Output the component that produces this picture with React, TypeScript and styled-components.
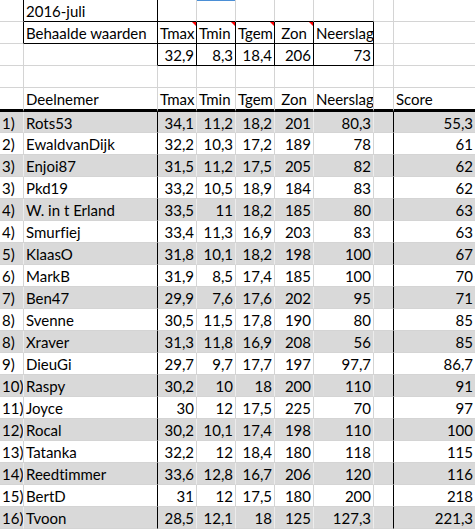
import React from 'react';
import styled, { createGlobalStyle, css } from 'styled-components';

const Global = createGlobalStyle`
  html, body { margin: 0; padding: 0; background: #ffffff; }
  body { font-family: Lato, "Liberation Sans", sans-serif; }
`;

const GRID = '#d4d4d4';
const GRID_ON_FILL = '#ececec';

type Edge = 'grid' | 'black' | 'none' | 'thick';

const edgeColor = (e?: Edge, fill?: boolean) =>
  e === 'black' || e === 'thick' ? '#000000' : e === 'none' ? 'transparent' : fill ? GRID_ON_FILL : GRID;

const Sheet = styled.div`
  display: grid;
  grid-template-columns: 24px 134px 39px 39px 39px 39px 60px 20px 82px;
  grid-template-rows: repeat(4, 22px) 24px 21px repeat(18, 22px);
  width: 476px;
  font-family: Lato, "Liberation Sans", sans-serif;
  font-size: 15px;
  font-variant-ligatures: none;
  font-feature-settings: "liga" 0, "clig" 0;
  color: #000000;
`;

const Cell = styled.div<{
  $r?: Edge;
  $b?: Edge;
  $fill?: boolean;
  $align?: 'left' | 'right' | 'center';
  $note?: boolean;
  $sel?: boolean;
}>`
  position: relative;
  box-sizing: border-box;
  overflow: hidden;
  white-space: nowrap;
  padding: 1px 2px 0 2px;
  line-height: 20px;
  text-align: ${(p) => p.$align ?? 'left'};
  background: ${(p) => (p.$fill ? '#d9d9d9' : '#ffffff')};
  border-right: 1px solid ${(p) => edgeColor(p.$r, p.$fill)};
  border-bottom: ${(p) => (p.$b === 'thick' ? '3px solid #000000' : `1px solid ${edgeColor(p.$b)}`)};
  ${(p) =>
    p.$note &&
    css`
      &::after {
        content: '';
        position: absolute;
        top: 0;
        right: 0;
        width: 0;
        height: 0;
        border-top: 4px solid #ff0000;
        border-left: 4px solid transparent;
      }
    `}
  ${(p) =>
    p.$sel &&
    css`
      box-shadow: inset 0 1px 0 #4b8fd6;
    `}
`;

type Row = [string, string, string, string, string, string, string, string];

const rows: Row[] = [
  ['1)', 'Rots53', '34,1', '11,2', '18,2', '201', '80,3', '55,3'],
  ['2)', 'EwaldvanDijk', '32,2', '10,3', '17,2', '189', '78', '61'],
  ['3)', 'Enjoi87', '31,5', '11,2', '17,5', '205', '82', '62'],
  ['3)', 'Pkd19', '33,2', '10,5', '18,9', '184', '83', '62'],
  ['4)', 'W. in t Erland', '33,5', '11', '18,2', '185', '80', '63'],
  ['4)', 'Smurfiej', '33,4', '11,3', '16,9', '203', '83', '63'],
  ['5)', 'KlaasO', '31,8', '10,1', '18,2', '198', '100', '67'],
  ['6)', 'MarkB', '31,9', '8,5', '17,4', '185', '100', '70'],
  ['7)', 'Ben47', '29,9', '7,6', '17,6', '202', '95', '71'],
  ['8)', 'Svenne', '30,5', '11,5', '17,8', '190', '80', '85'],
  ['8)', 'Xraver', '31,3', '11,8', '16,9', '208', '56', '85'],
  ['9)', 'DieuGi', '29,7', '9,7', '17,7', '197', '97,7', '86,7'],
  ['10)', 'Raspy', '30,2', '10', '18', '200', '110', '91'],
  ['11)', 'Joyce', '30', '12', '17,5', '225', '70', '97'],
  ['12)', 'Rocal', '30,2', '10,1', '17,4', '198', '110', '100'],
  ['13)', 'Tatanka', '32,2', '12', '18,4', '180', '118', '115'],
  ['14)', 'Reedtimmer', '33,6', '12,8', '16,7', '206', '120', '116'],
  ['15)', 'BertD', '31', '12', '17,5', '180', '200', '218'],
  ['16)', 'Tvoon', '28,5', '12,1', '18', '125', '127,3', '221,3'],
];

const heads = ['Tmax', 'Tmin', 'Tgem', 'Zon', 'Neerslag'];
const achieved = ['32,9', '8,3', '18,4', '206', '73'];

export default function App() {
  return (
    <>
      <Global />
      <Sheet>
        {/* Row 1 */}
        <Cell $r="black" />
        <Cell $r="black" $b="black">2016-juli</Cell>
        {[0, 1, 2, 3, 4].map((i) => (
          <Cell key={`r1-${i}`} $b="black" $sel={i === 1} />
        ))}
        <Cell />
        <Cell $r="none" />

        {/* Row 2 */}
        <Cell $r="black" />
        <Cell $r="black" $b="black">Behaalde waarden</Cell>
        {heads.map((h, i) => (
          <Cell key={`h1-${h}`} $r="black" $b="black" $note={i < 4} $align={h === 'Zon' ? 'center' : 'left'}>
            {h}
          </Cell>
        ))}
        <Cell />
        <Cell $r="none" />

        {/* Row 3 */}
        <Cell />
        <Cell $r="black" />
        {achieved.map((v, i) => (
          <Cell key={`a-${i}`} $r="black" $b="black" $align="right">
            {v}
          </Cell>
        ))}
        <Cell />
        <Cell $r="none" />

        {/* Row 4 */}
        {Array.from({ length: 9 }).map((_, i) => (
          <Cell key={`e-${i}`} $r={i === 8 ? 'none' : 'grid'} />
        ))}

        {/* Row 5 header */}
        <Cell $b="thick" />
        <Cell $b="thick">Deelnemer</Cell>
        {heads.map((h) => (
          <Cell key={`h2-${h}`} $b="thick" $align={h === 'Zon' ? 'center' : 'left'}>
            {h}
          </Cell>
        ))}
        <Cell $b="thick" />
        <Cell $b="thick" $r="none">Score</Cell>

        {/* Data rows */}
        {rows.map((r, ri) => {
          const fill = ri % 2 === 0;
          return (
            <React.Fragment key={`d-${ri}`}>
              <Cell $fill={fill}>{r[0]}</Cell>
              <Cell $fill={fill} $r="black">{r[1]}</Cell>
              {r.slice(2, 7).map((v, ci) => (
                <Cell key={`d-${ri}-${ci}`} $fill={fill} $align="right">
                  {v}
                </Cell>
              ))}
              <Cell $fill={fill} $r="black" />
              <Cell $fill={fill} $r="none" $align="right">
                {r[7]}
              </Cell>
            </React.Fragment>
          );
        })}
      </Sheet>
    </>
  );
}
